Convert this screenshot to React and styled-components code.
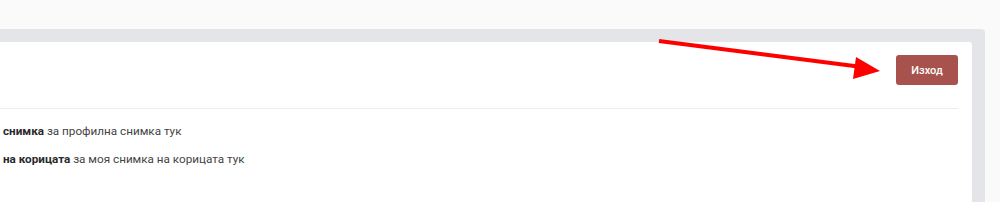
import styled, { createGlobalStyle } from "styled-components";

const GlobalStyle = createGlobalStyle`
  html, body {
    margin: 0;
    padding: 0;
    background: #fafafa;
    font-family: Roboto, "Liberation Sans", Arial, sans-serif;
    overflow: hidden;
  }
`;

const Page = styled.div`
  position: relative;
  height: 202px;
  padding-top: 29px;
  box-sizing: border-box;
`;

const Panel = styled.section`
  margin-right: 15px;
  height: 173px;
  background: #e4e5e8;
  border-top-right-radius: 4px;
  padding: 13px 13px 0 0;
  box-sizing: border-box;
`;

const Card = styled.div`
  background: #fff;
  height: 100%;
  border-top-right-radius: 3px;
  padding-right: 14px;
`;

const Header = styled.div`
  display: flex;
  justify-content: flex-end;
  padding: 13px 0 23px;
  border-bottom: 1px solid #ececec;
`;

const LogoutButton = styled.button`
  width: 62px;
  height: 30px;
  border: none;
  border-radius: 3px;
  background: #a8524d;
  color: #fff;
  font-family: Roboto, "Liberation Sans", Arial, sans-serif;
  font-size: 11px;
  font-weight: 500;
  cursor: pointer;
`;

const Notes = styled.div`
  padding: 15px 0 0 3px;
  display: flex;
  flex-direction: column;
  gap: 13px;
`;

const Note = styled.p`
  margin: 0;
  font-size: 11.7px;
  line-height: 15px;
  color: #444;

  b {
    color: #2a2a2a;
    font-weight: 700;
  }
`;

const Arrow = styled.svg`
  position: absolute;
  left: 0;
  top: 0;
  pointer-events: none;
`;

export default function App() {
  return (
    <>
      <GlobalStyle />
      <Page>
        <Panel>
          <Card>
            <Header>
              <LogoutButton>Изход</LogoutButton>
            </Header>
            <Notes>
              <Note>
                <b>снимка</b> за профилна снимка тук
              </Note>
              <Note>
                <b>на корицата</b> за моя снимка на корицата тук
              </Note>
            </Notes>
          </Card>
        </Panel>
        <Arrow width="1000" height="202" viewBox="0 0 1000 202">
          <line x1="659" y1="41" x2="862" y2="67" stroke="#ff0000" strokeWidth="4" />
          <polygon points="880,71 856,57 853,79" fill="#ff0000" />
        </Arrow>
      </Page>
    </>
  );
}
